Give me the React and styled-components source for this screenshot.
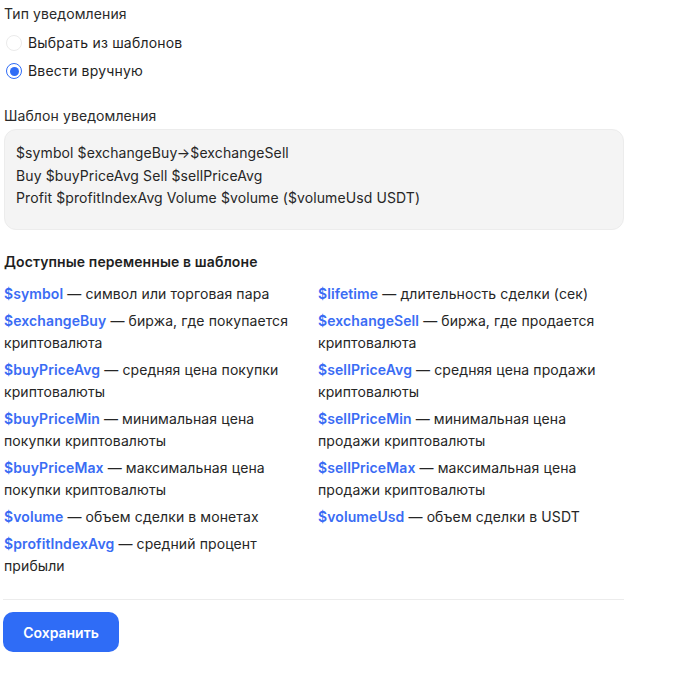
import styled, { createGlobalStyle } from "styled-components";

const GlobalStyle = createGlobalStyle`
  body {
    margin: 0;
    background: #fff;
    font-family: Inter, "Noto Sans", sans-serif;
    color: #1f1f1f;
    letter-spacing: 0.1px;
  }
`;

const Page = styled.div`
  width: 620px;
  padding: 4px 0 0 4px;
  display: flex;
  flex-direction: column;
`;

const Label = styled.div`
  font-size: 14px;
  line-height: 20px;
  color: #2a2a2a;
`;

const RadioGroup = styled.div`
  display: flex;
  flex-direction: column;
  gap: 8px;
  margin-top: 9px;
`;

const RadioRow = styled.label`
  display: flex;
  align-items: center;
  gap: 6px;
  font-size: 14px;
  line-height: 20px;
  color: #1f1f1f;
  letter-spacing: 0.2px;
`;

const RadioDot = styled.span`
  width: 16px;
  height: 16px;
  margin-left: 2px;
  border-radius: 50%;
  box-sizing: border-box;
  border: ${(p) => (p.$checked ? "1.5px solid #2f6cf6" : "1.5px solid #ebebeb")};
  background: #fff;
  display: flex;
  align-items: center;
  justify-content: center;

  &::after {
    content: "";
    display: ${(p) => (p.$checked ? "block" : "none")};
    width: 9px;
    height: 9px;
    border-radius: 50%;
    background: #2f6cf6;
  }
`;

const Section = styled.div`
  margin-top: ${(p) => p.$top || 0}px;
`;

const TemplateBox = styled.div`
  margin-top: 3px;
  background: #f4f4f4;
  border: 1px solid #ececec;
  border-radius: 12px;
  height: 101px;
  box-sizing: border-box;
  padding: 12px 11px;
  font-size: 14px;
  line-height: 22.5px;
  color: #262626;
`;

const Heading = styled.div`
  font-size: 14px;
  font-weight: 600;
  line-height: 20px;
  color: #1f1f1f;
`;

const VarGrid = styled.div`
  display: grid;
  grid-template-columns: 314px 306px;
  row-gap: 5px;
  margin-top: 11px;
`;

const VarItem = styled.div`
  font-size: 14px;
  line-height: 22px;
  color: #262626;
  padding-right: 14px;
`;

const VarName = styled.span`
  color: #3a6cf4;
  font-weight: 600;
`;

const Divider = styled.div`
  height: 1px;
  background: #ececec;
  margin: 22px 0 12px -1px;
`;

const SaveButton = styled.button`
  align-self: flex-start;
  margin-left: -1px;
  width: 116px;
  height: 40px;
  border: none;
  border-radius: 10px;
  background: #2f6cf6;
  color: #fff;
  font-family: Inter, "Noto Sans", sans-serif;
  font-size: 14px;
  font-weight: 600;
  cursor: pointer;
`;

const vars = [
  ["$symbol", "символ или торговая пара"],
  ["$lifetime", "длительность сделки (сек)"],
  ["$exchangeBuy", "биржа, где покупается криптовалюта"],
  ["$exchangeSell", "биржа, где продается криптовалюта"],
  ["$buyPriceAvg", "средняя цена покупки криптовалюты"],
  ["$sellPriceAvg", "средняя цена продажи криптовалюты"],
  ["$buyPriceMin", "минимальная цена покупки криптовалюты"],
  ["$sellPriceMin", "минимальная цена продажи криптовалюты"],
  ["$buyPriceMax", "максимальная цена покупки криптовалюты"],
  ["$sellPriceMax", "максимальная цена продажи криптовалюты"],
  ["$volume", "объем сделки в монетах"],
  ["$volumeUsd", "объем сделки в USDT"],
  ["$profitIndexAvg", "средний процент прибыли"],
];

export default function App() {
  return (
    <>
      <GlobalStyle />
      <Page>
        <Label>Тип уведомления</Label>
        <RadioGroup>
          <RadioRow>
            <RadioDot />
            Выбрать из шаблонов
          </RadioRow>
          <RadioRow>
            <RadioDot $checked />
            Ввести вручную
          </RadioRow>
        </RadioGroup>

        <Section $top={25}>
          <Label>Шаблон уведомления</Label>
          <TemplateBox>
            <div>$symbol $exchangeBuy→$exchangeSell</div>
            <div>Buy $buyPriceAvg Sell $sellPriceAvg</div>
            <div>Profit $profitIndexAvg Volume $volume ($volumeUsd USDT)</div>
          </TemplateBox>
        </Section>

        <Section $top={22}>
          <Heading>Доступные переменные в шаблоне</Heading>
          <VarGrid>
            {vars.map(([name, desc]) => (
              <VarItem key={name}>
                <VarName>{name}</VarName> — {desc}
              </VarItem>
            ))}
          </VarGrid>
        </Section>

        <Divider />
        <SaveButton>Сохранить</SaveButton>
      </Page>
    </>
  );
}
